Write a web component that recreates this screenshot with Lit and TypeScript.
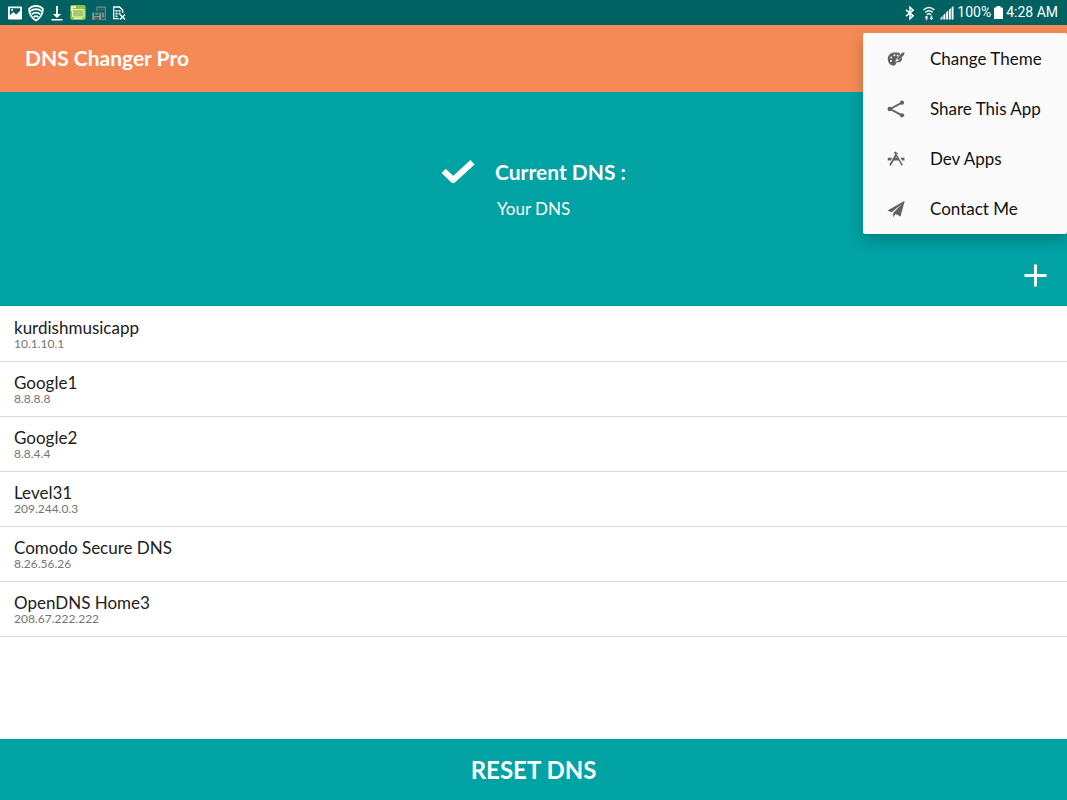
import { LitElement, html, css, svg } from "lit";
import { customElement, property, state } from "lit/decorators.js";

interface Server {
  name: string;
  address: string;
}

const SERVERS: Server[] = [
  { name: "kurdishmusicapp", address: "10.1.10.1" },
  { name: "Google1", address: "8.8.8.8" },
  { name: "Google2", address: "8.8.4.4" },
  { name: "Level31", address: "209.244.0.3" },
  { name: "Comodo Secure DNS", address: "8.26.56.26" },
  { name: "OpenDNS Home3", address: "208.67.222.222" },
];

const palette = svg`
  <path fill="currentColor" fill-rule="evenodd" d="M9 2.6C4.600 2 .8 4.700.8 8.700c0 3.900 2.500 6.900 5.900 6.900 2.300 0 1.700-1.900 2.700-2.900 1-.9 3.500.2 4.900-1.700.8-1.100 1-2.600.5-4L11.300 10.800 8.200 12 9.400 9l4.200-5C12.400 3 10.800 2.600 9 2.600zM7.400 4.300a1 1 0 1 1 0 2 1 1 0 0 1 0-2zM4.200 6.400a1 1 0 1 1 0 2 1 1 0 0 1 0-2zM4 9.900a1 1 0 1 1 0 2 1 1 0 0 1 0-2zM10.600 4.500a.9.9 0 1 1 0 1.800.9.9 0 0 1 0-1.800z"/>
  <path fill="currentColor" d="M17.400 2.200c-1.800.1-3 1.300-3.800 2.300L10 9l1.300 1.100 4.200-3.500c1-1 2.200-2.800 1.900-4.400z"/>`;

const share = svg`
  <path fill="none" stroke="currentColor" stroke-width="1.800" d="M15 2.600 3.200 9 15 15.400"/>
  <circle cx="15" cy="2.700" r="2.100" fill="currentColor"/>
  <circle cx="2.800" cy="9" r="2.300" fill="currentColor"/>
  <circle cx="15" cy="15.300" r="2.100" fill="currentColor"/>`;

const devApps = svg`
  <path fill="currentColor" d="M.8 7.800h4.400l-1.500 2.700H.8zM7.600 7.800h3.500l1.500 2.700H6zM13.600 7.800h3.800v2.700h-2.300z"/>
  <path fill="none" stroke="currentColor" stroke-width="1.800" d="m10.300 2.800-7.300 12.500M7.700 2l7.700 13.300"/>
  <path fill="none" stroke="#fafafa" stroke-width=".6" d="m9.400 3.500 6.700 11.600"/>`;

const plane = svg`
  <path fill="currentColor" d="M17.700.8.5 10.400l4.200 1.900L15 3.800 6.200 13v4.300l2.400-3.200 5 2.400z"/>`;

const MENU = [
  { label: "Change Theme", icon: palette },
  { label: "Share This App", icon: share },
  { label: "Dev Apps", icon: devApps },
  { label: "Contact Me", icon: plane },
];

@customElement("status-bar")
export class StatusBar extends LitElement {
  static styles = css`
    :host {
      display: flex;
      align-items: center;
      justify-content: space-between;
      height: 25px;
      padding: 0 9px 0 7px;
      background: #006162;
      color: #fff;
      font: 14px/25px Roboto, sans-serif;
    }
    .group {
      display: flex;
      align-items: center;
    }
    .notices {
      gap: 5px;
    }
    .system {
      gap: 3px;
    }
    svg {
      display: block;
    }
  `;

  render() {
    return html`
      <div class="group notices">
        <svg width="16" height="16" viewBox="0 0 16 16" aria-hidden="true">
          <path fill="#fff" fill-rule="evenodd" d="M2 1.500h12a1 1 0 0 1 1 1v11a1 1 0 0 1-1 1H2a1 1 0 0 1-1-1v-11a1 1 0 0 1 1-1zM2.800 3.200v7l3.400-3.100 3.100 2.500 3.900-3.800V3.200z"/>
          <circle cx="5" cy="5" r="1" fill="#fff"/>
        </svg>
        <svg width="16" height="18" viewBox="0 0 16 18" aria-hidden="true">
          <path fill="none" stroke="#fff" stroke-width="1.700" d="M1 4.800C5 .8 11 .8 15 4.800c-.1 5.200-2.500 9.200-7 11.700C3.500 14 1.100 10 1 4.800zM2.200 7.200c3.800-2.600 7.800-2.600 11.600 0M3.600 10.200c3-2 5.800-2 8.800 0M5.600 13c1.600-1.100 3.200-1.100 4.800 0"/>
        </svg>
        <svg width="16" height="18" viewBox="0 0 16 18" aria-hidden="true">
          <path fill="#fff" d="M7 2h2v8h3.200L8 14 3.800 10H7zM2.500 15h11v1.600h-11z"/>
        </svg>
        <svg width="16" height="17" viewBox="0 0 16 17" aria-hidden="true">
          <rect x=".3" y="1" width="15.400" height="15" rx="2" fill="#8cc63f"/>
          <rect x="2.500" y="5.500" width="11.500" height="7.500" rx="1" fill="#a6c970" stroke="#eef7d5"/>
          <path fill="#e5f2c8" d="M1 2h5v2H3v3H1z"/>
          <path stroke="#eef7d5" d="M4 14.500h8"/>
        </svg>
        <svg width="16" height="16" viewBox="0 0 16 16" aria-hidden="true">
          <path fill="none" stroke="#79898a" stroke-width="1.200" d="M6 6V2.200h8.300v12.300H11"/>
          <path fill="#8b9798" d="M1.200 7.500h2v3.500h5V7.500h2V15h-9z"/>
          <path fill="#4d5c5e" d="M7.200 3.500h5.800v2H7.200zM3.500 12.300h4.500V15H3.500z"/>
          <path fill="#79898a" d="M4.200 7.500h3V10h-3zM11 7.500h2v5h-2z"/>
        </svg>
        <svg width="16" height="16" viewBox="0 0 16 16" aria-hidden="true">
          <path fill="none" stroke="#fff" stroke-width="1.300" d="M7 13.700H1.700V2h5.800l3.200 3v3"/>
          <path fill="#fff" d="M3.500 5h2v1.700h-2zM6.500 5h2v1.700h-2zM3.500 7.700h2v1.700h-2zM6.500 7.700h2v1.700h-2zM3.500 10.400h2v1.700h-2z"/>
          <path fill="none" stroke="#fff" stroke-width="1.400" d="m8 9.500 5 5M13 9.500l-5 5"/>
        </svg>
      </div>
      <div class="group system">
        <svg width="16" height="16" viewBox="0 0 16 16" aria-hidden="true">
          <path fill="none" stroke="#fff" stroke-width="1.500" d="m4 4.800 7.200 6L8 13.800V2.200l3.200 3L4 11.200"/>
        </svg>
        <svg width="16" height="16" viewBox="0 0 16 16" aria-hidden="true">
          <path fill="none" stroke="#fff" stroke-width="1.400" d="M2.500 5c3.500-3.300 7.500-3.300 11 0M4.300 7.400c2.400-2.100 5-2.100 7.400 0M6 9.600c1.300-1.100 2.700-1.100 4 0"/>
          <path fill="#fff" d="m5.500 10.500 2 2h-1.200V15H4.800v-2.500H3.500zM9.700 10.500h1.500V13h1.300l-2 2-2-2h1.200z"/>
        </svg>
        <svg width="14" height="14" viewBox="0 0 14 14" aria-hidden="true">
          <path fill="#fff" d="M.5 13.500V12L2.500 10v3.500zM3.300 13.500V9.200l2-2v6.300zM6.100 13.500V6.600l2-2v8.900zM8.900 13.500V4l1.900-1.900v11.400zM11.600 13.500V1.600L13.500 0v13.500z"/>
        </svg>
        <span>100%</span>
        <svg width="9" height="15" viewBox="0 0 9 15" aria-hidden="true">
          <path fill="#fff" d="M2.500 1h4v1.500H8a1 1 0 0 1 1 1V14H0V3.500a1 1 0 0 1 1-1h1.500z"/>
        </svg>
        <span>4:28 AM</span>
      </div>
    `;
  }
}

@customElement("overflow-menu")
export class OverflowMenu extends LitElement {
  static styles = css`
    :host {
      display: block;
      box-sizing: border-box;
      width: 204px;
      padding-top: 1px;
      background: #fafafa;
      border-radius: 2px;
      box-shadow: 0 6px 14px rgba(0, 0, 0, 0.22);
    }
    .item {
      display: flex;
      align-items: center;
      gap: 25px;
      width: 100%;
      height: 50px;
      padding: 0 24px;
      border: 0;
      background: none;
      color: #111;
      font: 17px/24px Lato, sans-serif;
      text-align: left;
      white-space: nowrap;
      cursor: pointer;
    }
    .icon {
      flex: none;
      color: #616161;
    }
  `;

  render() {
    return html`${MENU.map(
      (item) => html`
        <button class="item" role="menuitem">
          <svg class="icon" width="18" height="18" viewBox="0 0 18 18" aria-hidden="true">${item.icon}</svg>
          <span>${item.label}</span>
        </button>
      `
    )}`;
  }
}

@customElement("server-list")
export class ServerList extends LitElement {
  @property({ attribute: false }) servers: Server[] = [];

  static styles = css`
    .list {
      margin: 0;
      padding: 1px 0 0;
      list-style: none;
    }
    .row {
      display: flex;
      flex-direction: column;
      justify-content: center;
      align-items: flex-start;
      width: 100%;
      height: 55px;
      padding: 0 14px;
      border: 0;
      border-bottom: 1px solid #dadada;
      background: none;
      font-family: Lato, sans-serif;
      text-align: left;
      cursor: pointer;
    }
    .name {
      color: #212121;
      font-size: 17px;
      line-height: 19px;
    }
    .address {
      color: #757575;
      font-size: 12px;
      line-height: 14px;
    }
  `;

  render() {
    return html`
      <ul class="list">
        ${this.servers.map(
          (s) => html`
            <li>
              <button class="row">
                <span class="name">${s.name}</span>
                <span class="address">${s.address}</span>
              </button>
            </li>
          `
        )}
      </ul>
    `;
  }
}

@customElement("app-root")
export class AppRoot extends LitElement {
  @state() private servers = SERVERS;

  static styles = css`
    :host {
      display: flex;
      flex-direction: column;
      position: relative;
      min-height: 100vh;
      background: #fff;
      color: #fff;
      font-family: Lato, sans-serif;
    }
    .toolbar {
      display: flex;
      align-items: center;
      box-sizing: border-box;
      height: 67px;
      padding: 0 25px 2px;
      background: #f68a56;
    }
    .title {
      margin: 0;
      font-size: 21px;
      line-height: 26px;
      font-weight: 700;
    }
    .hero {
      display: flex;
      flex-direction: column;
      justify-content: space-between;
      box-sizing: border-box;
      height: 214px;
      padding: 64px 16px 14px;
      background: #00a2a4;
    }
    .current {
      display: grid;
      grid-template-columns: auto auto;
      justify-content: center;
      align-items: center;
      column-gap: 20px;
      row-gap: 9px;
    }
    .heading {
      margin: 0;
      font-size: 21px;
      line-height: 32px;
      font-weight: 700;
    }
    .value {
      grid-column: 2;
      margin: 0;
      padding-left: 2px;
      font-size: 17px;
      line-height: 24px;
    }
    .add {
      align-self: flex-end;
      display: block;
      padding: 0;
      border: 0;
      background: none;
      color: inherit;
      cursor: pointer;
    }
    .add svg {
      display: block;
    }
    .servers {
      flex: 1;
    }
    .reset {
      height: 61px;
      border: 0;
      background: #00a2a4;
      color: #fff;
      font: 700 24px/30px Lato, sans-serif;
      cursor: pointer;
    }
    .menu {
      position: absolute;
      top: 33px;
      right: 0;
    }
  `;

  render() {
    return html`
      <status-bar></status-bar>
      <header class="toolbar"><h1 class="title">DNS Changer Pro</h1></header>
      <section class="hero">
        <div class="current">
          <svg width="34" height="26" viewBox="0 0 34 26" aria-hidden="true">
            <path fill="none" stroke="#fff" stroke-width="6" stroke-linejoin="round" d="M2.600 11.800 12.200 21 31.500 3.200"/>
          </svg>
          <h2 class="heading">Current DNS :</h2>
          <p class="value">Your DNS</p>
        </div>
        <button class="add" aria-label="Add DNS server">
          <svg width="32" height="32" viewBox="0 0 32 32" aria-hidden="true">
            <path fill="none" stroke="currentColor" stroke-width="3" d="M16.500 4.500v22M5.500 15.500h22"/>
          </svg>
        </button>
      </section>
      <server-list class="servers" .servers=${this.servers}></server-list>
      <button class="reset">RESET DNS</button>
      <overflow-menu class="menu" role="menu"></overflow-menu>
    `;
  }
}
